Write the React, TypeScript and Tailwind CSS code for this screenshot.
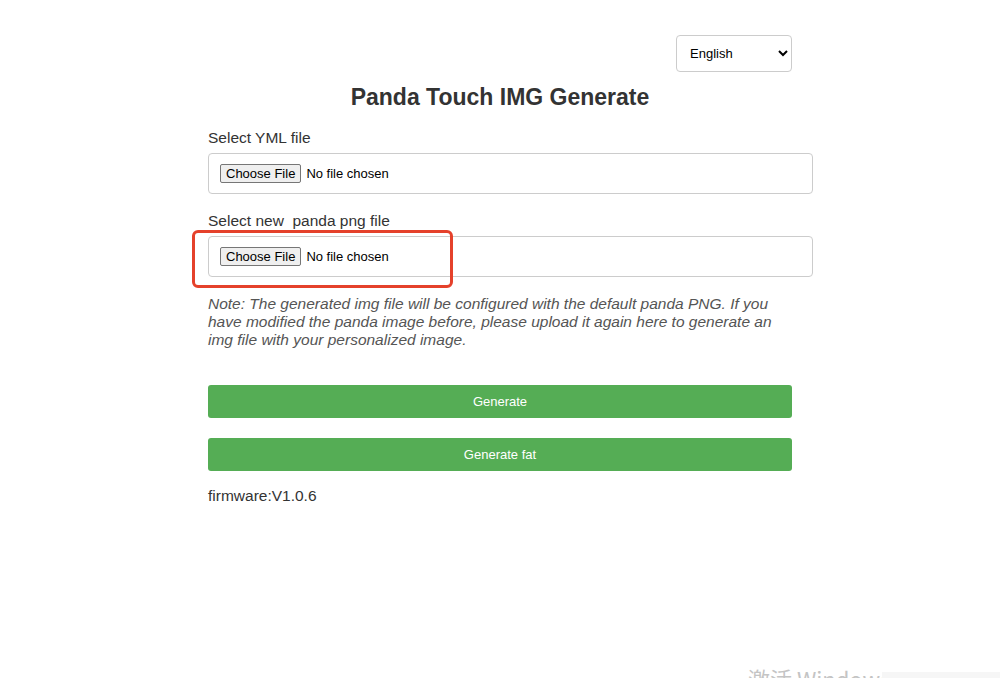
import { useState } from "react";

function FilePicker() {
  return (
    <div className="flex h-[41px] w-[605px] items-center rounded-[4px] border border-[#cccccc] bg-white pl-[11px]">
      <button className="h-[19px] rounded-[2px] border border-[#767676] bg-[#efefef] px-[5px] text-[13px] leading-[15px] text-black">
        Choose File
      </button>
      <span className="ml-[5px] text-[13px] text-black">No file chosen</span>
    </div>
  );
}

export default function App() {
  const [lang, setLang] = useState("en");

  return (
    <div className="relative h-[678px] w-full overflow-hidden bg-white font-['Liberation_Sans',Arial,sans-serif] text-[#333333]">
      <div className="mx-auto flex w-[584px] flex-col">
        {/* language */}
        <div className="flex justify-end pt-[35px]">
          <select
            value={lang}
            onChange={(e) => setLang(e.target.value)}
            className="h-[37px] w-[116px] rounded-[4px] border border-[#cccccc] bg-white pl-[9px] pr-[6px] text-[13px] text-black"
          >
            <option value="en">English</option>
            <option value="zh">中文</option>
          </select>
        </div>

        <h1 className="mt-[11px] text-center text-[23px] font-bold leading-[28px] text-[#333333]">
          Panda Touch IMG Generate
        </h1>

        <label className="mt-[18px] text-[15.5px] leading-[18px]">Select YML file</label>
        <div className="mt-[6px]">
          <FilePicker />
        </div>

        <label className="mt-[18px] text-[15.5px] leading-[18px] whitespace-pre">Select new  panda png file</label>
        <div className="relative mt-[6px]">
          <FilePicker />
          {/* annotation */}
          <div className="pointer-events-none absolute -left-[16px] -top-[6px] h-[58px] w-[261px] rounded-[6px] border-[3px] border-[#e5412b]" />
        </div>

        <p className="mt-[18px] text-[15.5px] italic leading-[18px] text-[#555555]">
          Note: The generated img file will be configured with the default panda PNG. If you have modified the panda image before, please upload it again here to generate an img file with your personalized image.
        </p>

        <button className="mt-[36px] h-[33px] w-full rounded-[3px] bg-[#55ad55] text-[13px] text-white">
          Generate
        </button>
        <button className="mt-[20px] h-[33px] w-full rounded-[3px] bg-[#55ad55] text-[13px] text-white">
          Generate fat
        </button>

        <div className="mt-[16px] text-[15.5px] leading-[18px] text-[#333333]">firmware:V1.0.6</div>
      </div>

      {/* windows watermark */}
      <div className="pointer-events-none absolute left-[748px] top-[664px] whitespace-nowrap font-['Noto_Sans_CJK_SC','Noto_Sans',sans-serif] text-[22px] leading-[28px] text-[#c4c4c4]">
        激活 Windows
      </div>
      <div className="pointer-events-none absolute left-[882px] top-[672px] h-[6px] w-[118px] bg-[#f6f6f6]" />
    </div>
  );
}
